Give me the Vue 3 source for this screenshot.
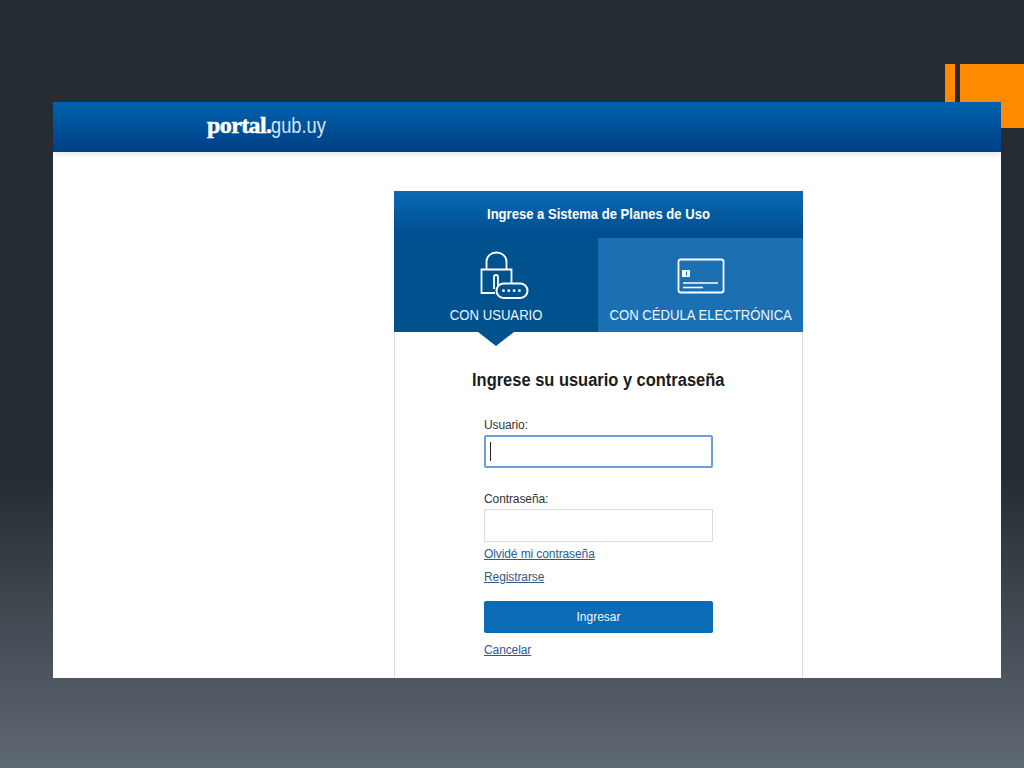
<script setup>
const links = ['Olvidé mi contraseña', 'Registrarse']
</script>

<template>
  <div class="slide">
    <div class="deco">
      <span class="deco-thin"></span>
      <span class="deco-wide"></span>
    </div>
    <div class="window">
      <header class="topbar">
        <div class="logo"><b>portal.</b><span>gub.uy</span></div>
      </header>
      <main class="content">
        <section class="card">
          <h1 class="card-title"><span>Ingrese a Sistema de Planes de Uso</span></h1>
          <div class="tabs">
            <div class="tab active">
              <svg class="ico-lock" width="50" height="50" viewBox="0 0 50 50" fill="none" stroke="#fff" stroke-width="1.8">
                <path d="M15 43H1.500V19.500H31.500V33" />
                <path d="M6.500 19V11.500a10 9 0 0 1 20 0V19" />
                <path d="M14 39V27a2 2 0 0 1 4 0V36" />
                <rect x="16.500" y="33.500" width="31" height="14.500" rx="7.200" fill="#00528f" stroke-width="2" />
                <g fill="#fff" stroke="none">
                  <circle cx="23.500" cy="40.700" r="1.400" />
                  <circle cx="28.800" cy="40.700" r="1.400" />
                  <circle cx="34.100" cy="40.700" r="1.400" />
                  <circle cx="39.400" cy="40.700" r="1.400" />
                </g>
              </svg>
              <span class="tab-label"><span>CON USUARIO</span></span>
            </div>
            <div class="tab">
              <svg class="ico-card" width="48" height="36" viewBox="0 0 48 36" fill="none" stroke="#fff" stroke-width="1.800">
                <rect x="1.500" y="1.500" width="45" height="33" rx="2" />
                <rect x="5" y="12" width="8" height="7" fill="#fff" stroke="none" />
                <path d="M9.500 13.500v4" stroke="#1a70b3" stroke-width="1.200" />
                <path d="M6 25h35" stroke-width="1.600" />
                <path d="M6 29.500h20" stroke-width="1.600" />
              </svg>
              <span class="tab-label"><span>CON CÉDULA ELECTRÓNICA</span></span>
            </div>
            <span class="arrow"></span>
          </div>
          <div class="body">
            <h2 class="form-title"><span>Ingrese su usuario y contraseña</span></h2>
            <form class="form" @submit.prevent>
              <label class="label">Usuario:</label>
              <div class="field focus"><i class="caret"></i></div>
              <label class="label second">Contraseña:</label>
              <div class="field"></div>
              <a v-for="l in links" :key="l" class="link stacked" href="#">{{ l }}</a>
              <button class="submit" type="button">Ingresar</button>
              <a class="link" href="#">Cancelar</a>
            </form>
          </div>
        </section>
      </main>
    </div>
  </div>
</template>

<style>
html, body { margin: 0; padding: 0; }
</style>

<style scoped>
.slide {
  position: relative;
  width: 1024px;
  height: 768px;
  overflow: hidden;
  padding: 102px 0 0 53px;
  box-sizing: border-box;
  background: linear-gradient(180deg, #262c33 0, #262c33 480px, #5f6973 768px);
  font-family: "Liberation Sans", Arial, sans-serif;
}
.deco {
  position: absolute;
  top: 64px;
  left: 945px;
  width: 79px;
  height: 64px;
}
.deco-thin {
  position: absolute;
  left: 0;
  top: 0;
  width: 10px;
  height: 64px;
  background: #ff8a00;
}
.deco-wide {
  position: absolute;
  left: 15px;
  top: 0;
  width: 64px;
  height: 64px;
  background: #ff8a00;
}
.window {
  position: relative;
  width: 948px;
  height: 576px;
  background: #fff;
  overflow: hidden;
}
.topbar {
  height: 50px;
  box-sizing: border-box;
  background: linear-gradient(180deg, #0062ad 0, #003f85 100%);
  box-shadow: 0 2px 6px rgba(0, 0, 0, 0.12);
  padding: 0 0 3px 154px;
  display: flex;
  align-items: center;
  position: relative;
}
.logo {
  color: #fff;
  font-size: 24px;
  line-height: 44px;
  white-space: nowrap;
}
.logo b {
  font-family: "Liberation Serif", serif;
  font-weight: 700;
  letter-spacing: -0.6px;
  -webkit-text-stroke: 0.5px #fff;
}
.logo span {
  font-family: "Liberation Sans", sans-serif;
  font-weight: 400;
  color: #d5e4f2;
  font-size: 22px;
  display: inline-block;
  transform: scaleX(0.83);
  transform-origin: left center;
}
.content {
  padding: 39px 0 0 341px;
}
.card {
  width: 409px;
  height: 487px;
  box-sizing: border-box;
  border-left: 1px solid #ddd;
  border-right: 1px solid #ddd;
}
.card-title {
  margin: 0 -1px;
  height: 47px;
  line-height: 47px;
  text-align: center;
  font-size: 14px;
  font-weight: 700;
  color: #fff;
  background: linear-gradient(180deg, #0b69b1 0, #004c8e 100%);
}
.card-title span {
  display: inline-block;
  transform: scaleX(0.933);
}
.tabs {
  display: flex;
  position: relative;
  margin: 0 -1px;
  height: 94px;
}
.tab {
  flex: 1;
  background: #1a70b3;
  color: #eef5fb;
  display: flex;
  flex-direction: column;
  align-items: center;
  position: relative;
}
.tab.active {
  background: #00528f;
  flex: 0 0 204px;
}
.ico-lock {
  align-self: flex-start;
  margin-top: 12px;
  margin-left: 86px;
}
.ico-card {
  margin-top: 20px;
}
.tab-label {
  position: absolute;
  left: 0;
  right: 0;
  top: 68px;
  text-align: center;
  font-size: 14.500px;
  line-height: 18px;
  white-space: nowrap;
}
.tab-label span {
  display: inline-block;
  transform: scaleX(0.905);
}
.arrow {
  position: absolute;
  left: 84px;
  top: 94px;
  width: 0;
  height: 0;
  border-left: 18px solid transparent;
  border-right: 18px solid transparent;
  border-top: 14px solid #00528f;
}
.body {
  padding-top: 37px;
}
.form-title {
  margin: 0;
  text-align: center;
  font-size: 17.500px;
  line-height: 22px;
  font-weight: 700;
  color: #1c1c1c;
}
.form-title span {
  display: inline-block;
  transform: scaleX(0.94);
}
.form {
  width: 229px;
  margin: 26px 0 0 89px;
  display: flex;
  flex-direction: column;
  align-items: flex-start;
}
.label {
  font-size: 12px;
  letter-spacing: -0.1px;
  line-height: 16px;
  color: #333;
}
.label.second {
  margin-top: 23px;
}
.field {
  width: 229px;
  height: 33px;
  box-sizing: border-box;
  border: 1px solid #dcdcdc;
  background: #fff;
  margin-top: 2px;
  position: relative;
}
.field.focus {
  border: 2px solid #6a9fdc;
  border-radius: 2px;
}
.caret {
  position: absolute;
  left: 4px;
  top: 5px;
  width: 1px;
  height: 19px;
  background: #222;
}
.link {
  font-size: 12px;
  letter-spacing: -0.1px;
  line-height: 16px;
  color: #2f5a8a;
  text-decoration: underline;
  margin-top: 4px;
}
.link.stacked + .link.stacked {
  margin-top: 7px;
}
.submit {
  width: 229px;
  height: 32px;
  margin-top: 16px;
  border: 0;
  border-radius: 2px;
  background: #0b6cb5;
  color: #f2f7fb;
  font-family: inherit;
  font-size: 12px;
  padding: 0;
}
.submit + .link {
  margin-top: 9px;
}
</style>
